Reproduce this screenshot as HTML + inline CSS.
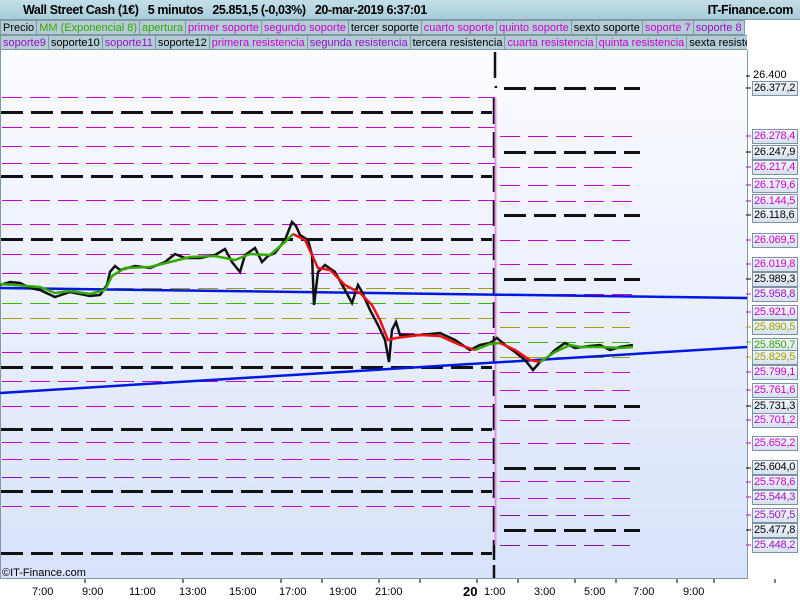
<!DOCTYPE html>
<html><head><meta charset="utf-8"><style>
body{margin:0;width:800px;height:600px;overflow:hidden;font-family:"Liberation Sans",sans-serif;background:#fff;position:relative}
.title{position:absolute;left:0;top:0;width:800px;height:20px;background:linear-gradient(#c4dfe9,#a9ccd9);border-bottom:1px solid #7f9aa6;box-sizing:border-box;font-weight:bold;font-size:12.5px;line-height:20px;letter-spacing:-0.4px}
.row{position:absolute;left:0;height:15px;display:flex;font-size:11px;line-height:14px;white-space:nowrap;overflow:hidden}
.row span{background:#b3ccd6;border:1px solid #7f9aa6;border-left:none;padding:0 2px;box-sizing:border-box;height:15px}
.m{color:#d000d0}.g{color:#33aa00}.k{color:#000}.p{color:#9a10c8}
.lab{position:absolute;left:752px;width:46px;height:15px;border:1px solid #7a94a6;box-sizing:border-box;background:linear-gradient(#f2f6fc,#d7e1ee);font-size:11px;line-height:13px;padding-left:1px;letter-spacing:-0.2px;overflow:hidden;white-space:nowrap}
.t{position:absolute;top:586px;font-size:11px}
</style></head><body>
<svg width="800" height="600" style="position:absolute;left:0;top:0">
<defs><linearGradient id="bg" x1="0" y1="0" x2="0" y2="1"><stop offset="0" stop-color="#fbfcff"/><stop offset="1" stop-color="#d8e2fa"/></linearGradient></defs>
<rect x="0" y="50" width="747" height="528" fill="url(#bg)"/>
<rect x="747" y="50" width="53" height="528" fill="#fff"/>
<rect x="0" y="578" width="800" height="22" fill="#fff"/>
<line x1="747.5" y1="50" x2="747.5" y2="579" stroke="#7f9aa6"/>
<line x1="0" y1="578.5" x2="747" y2="578.5" stroke="#7f9aa6"/>
<line x1="0.5" y1="50" x2="0.5" y2="578" stroke="#7f9aa6"/>
<g fill="none">
<g stroke="#cc00cc" stroke-width="1" stroke-dasharray="20 8">
<path d="M2 97.5H495M2 127.5H495M2 146.5H495M2 163.5H495M2 200.5H495M2 224.5H495M2 254.5H495M2 273.5H495M2 333.5H495M2 352.5H495M2 381.5H495M2 406.5H495M2 442.5H495M2 459.5H495M2 506.5H495"/>
<path stroke="#8010b0" d="M2 477.5H495"/>
<path stroke="#a0a000" d="M2 288.5H495M2 318.5H495"/>
<path stroke="#33bb00" d="M2 303.5H495"/>
<path d="M500 136.5H640M500 167.5H640M500 185.5H630M500 201.5H640M500 240.5H630M500 264.5H640M500 294.5H640M500 312.5H630M500 372.5H630M500 390.5H630M500 420.5H630M500 443.5H630M500 481.5H630M500 498.5H630"/>
<path stroke="#8010b0" d="M500 515.5H630M500 545.5H630"/>
<path stroke="#a0a000" d="M500 327.5H630M500 357.5H630"/>
<path stroke="#33bb00" d="M500 342.5H630"/>
</g>
<g stroke="#111" stroke-width="3" stroke-dasharray="22 8">
<path d="M1 112.5H492M1 176.5H492M1 239.5H492M1 367.5H492M1 429.5H492M1 491.5H492M1 553.5H492"/>
<path d="M504 88.5H640M504 152.5H640M504 215.5H640M504 279.5H640M504 406.5H640M504 468.5H640M504 530.5H640"/>
</g>
<path d="M495 52V80l1 8M494 98V560M494 565V578" stroke="#111" stroke-width="2.5" stroke-dasharray="26 8"/>
<path d="M495.5 98V545" stroke="#e890e8" stroke-width="2"/>
<path d="M0 288L747 298" stroke="#0018e0" stroke-width="2.5"/>
<path d="M0 393L747 347" stroke="#0018e0" stroke-width="2.5"/>
<path stroke="#111" stroke-width="2.5" d="M0 285L10 282 20 283 30 288 40 290 55 297 70 292 90 296 100 295 107 285 110 272 115 266 120 270 135 266 150 268 165 262 175 254 185 258 200 258 215 255 225 249 232 262 240 272 245 255 255 248 262 262 268 256 275 253 285 240 292 222 296 226 300 235 308 240 312 255 314 305 318 272 325 265 335 272 345 290 352 303 358 285 362 292 370 310 378 325 385 340 389 362 392 330 396 322 400 335 420 335 440 333 455 340 470 350 480 345 490 343 497 338 505 345 515 352 525 360 533 370 540 362 548 357 555 350 565 343 575 348 590 346 600 345 610 350 620 347 633 345"/>
<path stroke="#33aa00" stroke-width="2.5" d="M0 284L40 287 55 293 70 291 90 294 105 290 112 276 125 268 150 267 170 262 190 257 215 256 235 260 250 254 270 255 285 242 293 234"/>
<path stroke="#ee1111" stroke-width="2.5" d="M293 234L305 240 312 255 318 268 330 270 345 285 360 293 372 305 380 320 388 340 396 338 420 335 440 336 460 345 475 350"/>
<path stroke="#33aa00" stroke-width="2.5" d="M475 350L490 344 500 343"/>
<path stroke="#ee1111" stroke-width="2.5" d="M500 343L515 350 530 360 540 362"/>
<path stroke="#33aa00" stroke-width="2.5" d="M540 362L555 352 570 345 580 347 600 347 620 348 633 347"/>
</g>
<g stroke="#000"><path d="M85 579v4M183 579v4M281 579v4M379 579v4M477 579v4M575 579v4M677 579v4M775 579v4M322 579v4M420 579v4M518 579v4M616 579v4M714 579v4"/></g>
<g stroke="#000"><path d="M746 76h4M746 88h5M746 152h5M746 215h5M746 279h5M746 406h5M746 468h5M746 530h5"/></g>
<g stroke="#cc00cc"><path d="M746 136h5M746 167h5M746 185h5M746 201h5M746 240h5M746 264h5M746 294h5M746 312h5M746 372h5M746 390h5M746 420h5M746 443h5M746 482h5M746 497h5M746 515h5M746 545h5"/></g>
<g stroke="#a0a000"><path d="M746 327h5M746 357h5"/></g><path stroke="#33bb00" d="M746 342h5"/>
<rect x="4" y="10" width="5" height="8" fill="#e84040" stroke="#600" stroke-width="1"/>
<rect x="11" y="4" width="5" height="10" fill="#40d040" stroke="#060" stroke-width="1"/>
</svg>
<div class="title"><span style="position:absolute;left:23px">Wall Street Cash (1€)&nbsp;&nbsp;&nbsp;5 minutos&nbsp;&nbsp;&nbsp;25.851,5 (-0,03%)&nbsp;&nbsp;&nbsp;20-mar-2019 6:37:01</span><span style="position:absolute;right:7px">IT-Finance.com</span></div>
<div class="row" style="top:20px;width:760px"><span class="k" style="border-left:1px solid #7f9aa6">Precio</span><span class="g">MM (Exponencial 8)</span><span class="g">apertura</span><span class="m">primer soporte</span><span class="m">segundo soporte</span><span class="k">tercer soporte</span><span class="m">cuarto soporte</span><span class="m">quinto soporte</span><span class="k">sexto soporte</span><span class="m">soporte 7</span><span class="p">soporte 8</span></div>
<div class="row" style="top:35px;width:747px"><span class="p" style="border-left:1px solid #7f9aa6">soporte9</span><span class="k">soporte10</span><span class="p">soporte11</span><span class="k">soporte12</span><span class="m">primera resistencia</span><span class="p">segunda resistencia</span><span class="k">tercera resistencia</span><span class="m">cuarta resistencia</span><span class="m">quinta resistencia</span><span class="k">sexta resistencia</span></div>
<div style="position:absolute;left:753px;top:69px;font-size:11px">26.400</div>
<div class="lab k" style="top:81px">26.377,2</div>
<div class="lab m" style="top:129px">26.278,4</div>
<div class="lab k" style="top:145px">26.247,9</div>
<div class="lab m" style="top:160px">26.217,4</div>
<div class="lab m" style="top:178px">26.179,6</div>
<div class="lab m" style="top:194px">26.144,5</div>
<div class="lab k" style="top:208px">26.118,6</div>
<div class="lab m" style="top:233px">26.069,5</div>
<div class="lab m" style="top:257px">26.019,8</div>
<div class="lab k" style="top:272px">25.989,3</div>
<div class="lab p" style="top:287px">25.958,8</div>
<div class="lab m" style="top:305px">25.921,0</div>
<div class="lab" style="top:320px;color:#a0a000">25.890,5</div>
<div class="lab g" style="top:338px">25.850,7</div>
<div class="lab" style="top:350px;color:#a0a000">25.829,5</div>
<div class="lab m" style="top:365px">25.799,1</div>
<div class="lab m" style="top:383px">25.761,6</div>
<div class="lab k" style="top:399px">25.731,3</div>
<div class="lab m" style="top:413px">25.701,2</div>
<div class="lab m" style="top:436px">25.652,2</div>
<div class="lab k" style="top:460px">25.604,0</div>
<div class="lab m" style="top:475px">25.578,6</div>
<div class="lab p" style="top:490px">25.544,3</div>
<div class="lab p" style="top:508px">25.507,5</div>
<div class="lab k" style="top:523px">25.477,8</div>
<div class="lab p" style="top:538px">25.448,2</div>
<div style="position:absolute;left:2px;top:567px;font-size:11px">©IT-Finance.com</div>
<div class="t" style="left:32px">7:00</div><div class="t" style="left:82px">9:00</div><div class="t" style="left:129px">11:00</div><div class="t" style="left:179px">13:00</div><div class="t" style="left:229px">15:00</div><div class="t" style="left:279px">17:00</div><div class="t" style="left:329px">19:00</div><div class="t" style="left:375px">21:00</div>
<div class="t" style="left:463px;font-weight:bold;top:584px;font-size:13px">20</div><div class="t" style="left:484px">1:00</div><div class="t" style="left:534px">3:00</div><div class="t" style="left:584px">5:00</div><div class="t" style="left:633px">7:00</div><div class="t" style="left:683px">9:00</div>
</body></html>
